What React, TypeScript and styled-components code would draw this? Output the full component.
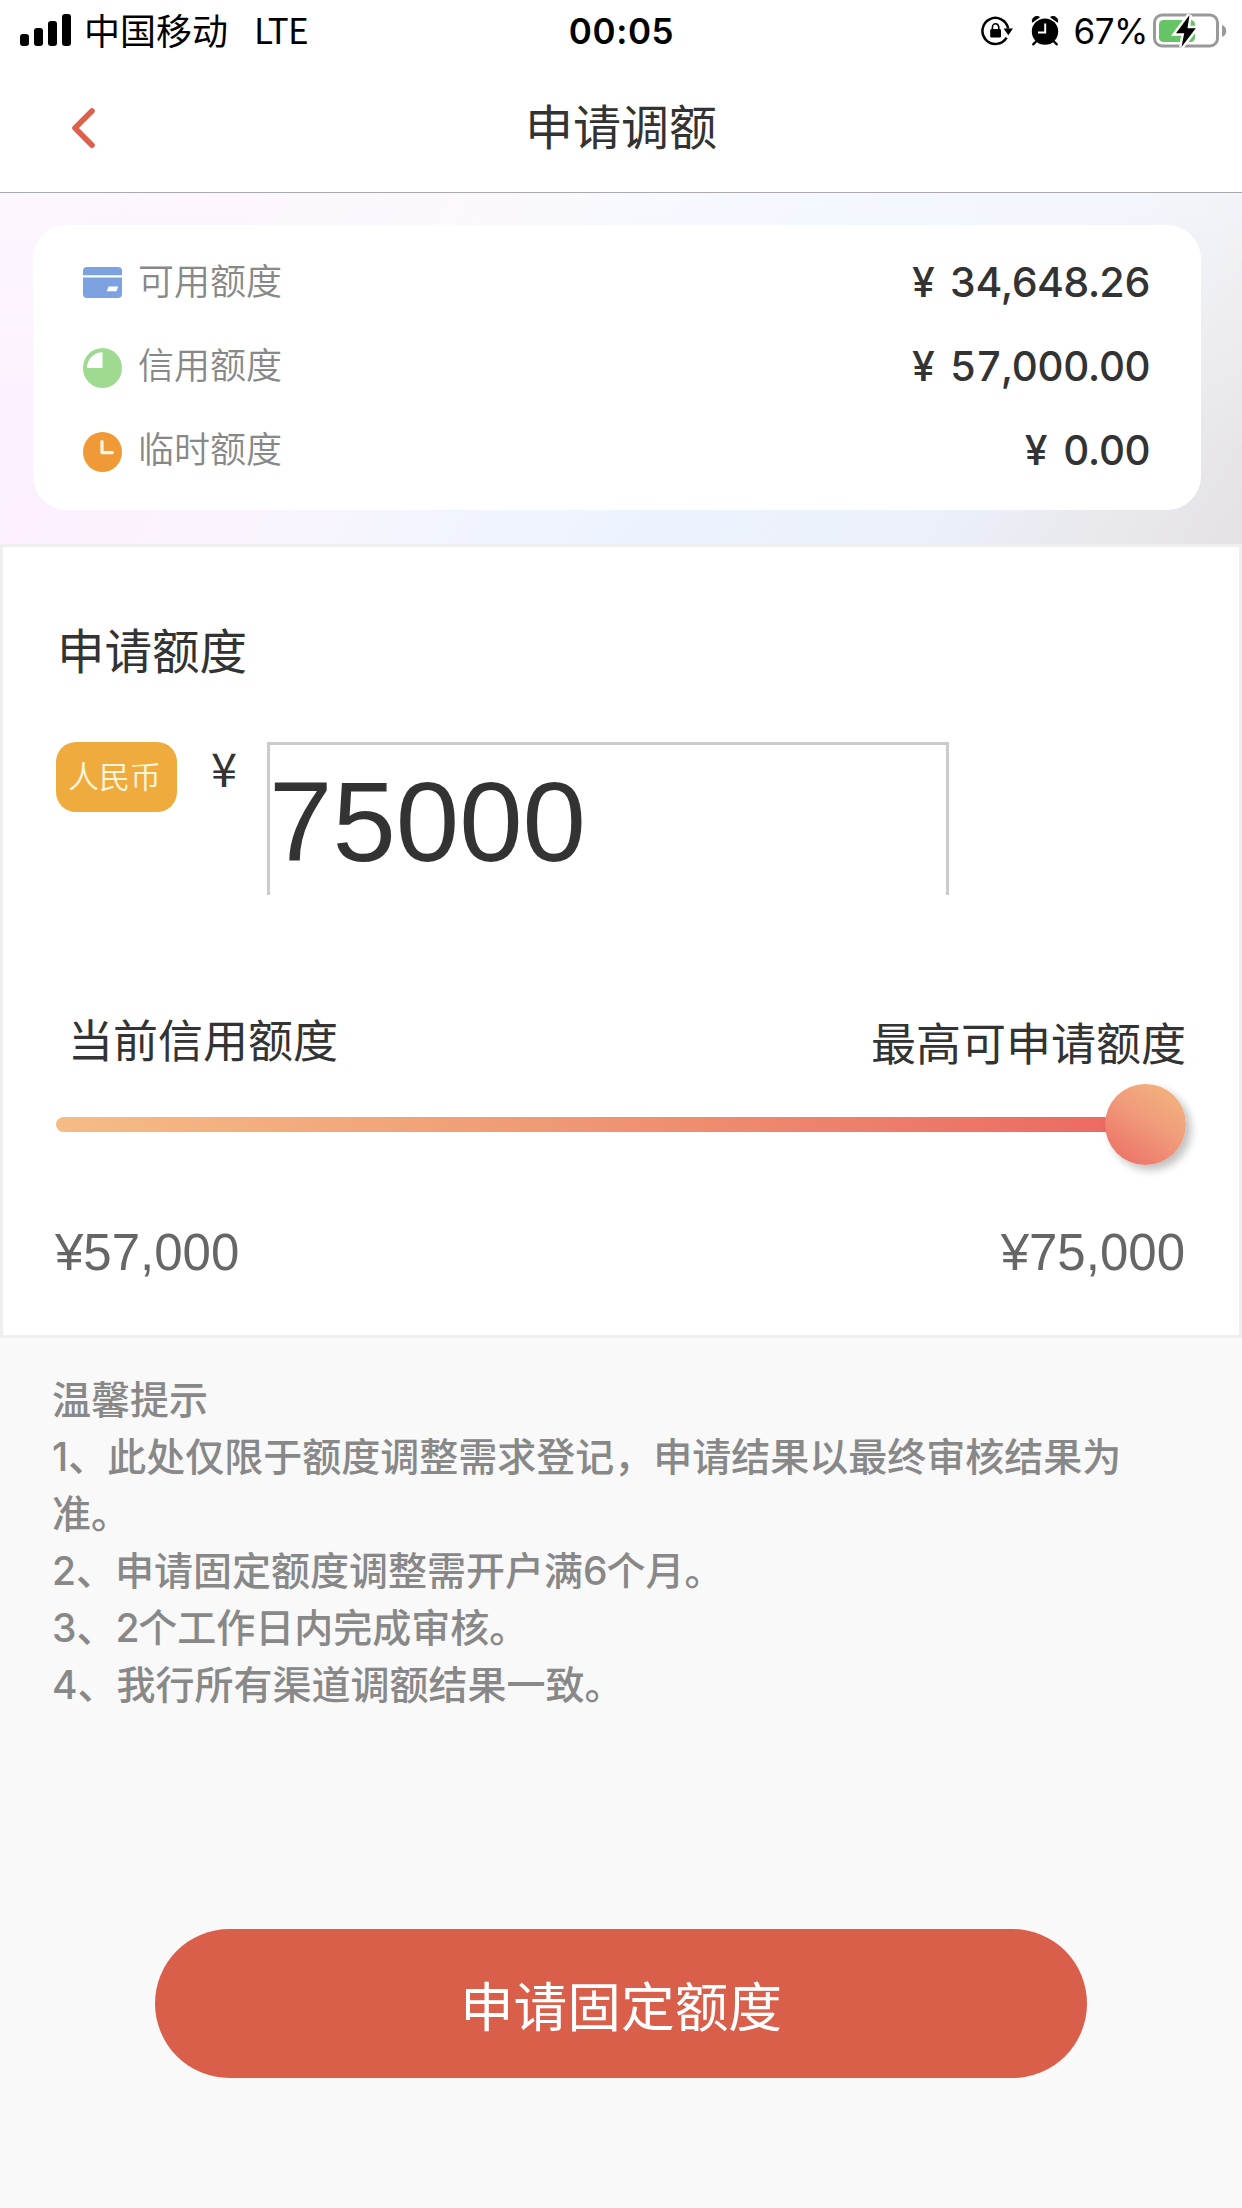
import React from 'react';
import styled, { createGlobalStyle } from 'styled-components';

const cjk = '"Noto Sans CJK SC", sans-serif';
const ui = 'Inter, "Noto Sans CJK SC", sans-serif';
const helv = '"Liberation Sans", "Noto Sans CJK SC", sans-serif';

const GlobalStyle = createGlobalStyle`
  *, *::before, *::after { box-sizing: border-box; }
  body { margin: 0; background: #f9f9f9; font-family: ${cjk}; color: #333; }
  svg { display: block; flex: none; }
`;

const Screen = styled.div`
  display: flex;
  flex-direction: column;
  width: 1242px;
  height: 2208px;
  background: #f9f9f9;
  overflow: hidden;
`;

const StatusBar = styled.header`
  display: grid;
  grid-template-columns: 1fr auto 1fr;
  align-items: center;
  height: 62px;
  padding: 0 15px 0 20px;
  background: #fff;
  color: #000;
`;

const StatusGroup = styled.div<{ $end?: boolean }>`
  display: flex;
  align-items: center;
  justify-content: ${(p) => (p.$end ? 'flex-end' : 'flex-start')};
`;

const Carrier = styled.span`
  margin: -4px 0 0 12px;
  font: 400 36px/40px ${cjk};
`;

const Network = styled.span`
  margin: -4px 0 0 26px;
  font: 400 35px/40px ${cjk};
  letter-spacing: -0.6px;
`;

const Clock = styled.time`
  padding-right: 4px;
  font: 600 35px/40px ${ui};
  letter-spacing: 0.6px;
`;

const StatusIcons = styled.div`
  display: flex;
  align-items: center;
  gap: 18px;
`;

const Percent = styled.span`
  margin: 0 5px 0 15px;
  font: 400 35px/40px ${ui};
  letter-spacing: -0.5px;
`;

const NavBar = styled.nav`
  display: grid;
  grid-template-columns: 120px 1fr 120px;
  align-items: center;
  height: 131px;
  background: #fff;
  border-bottom: 1px solid #a9a9ae;
`;

const BackButton = styled.button`
  padding: 1px 0 0 70px;
  border: 0;
  background: none;
`;

const Title = styled.h1`
  margin: 0 0 7px;
  text-align: center;
  font: 400 48px/60px ${cjk};
`;

const Hero = styled.section`
  height: 351px;
  padding: 32px 41px 34px 33px;
  background:
    linear-gradient(180deg, rgba(255, 255, 255, 0.4) 0%, rgba(255, 255, 255, 0) 75%),
    linear-gradient(122deg, #fbf1fe 0%, #fcf0fe 16%, #faf4fd 32%, #f2f5fe 44%, #edf3fe 58%, #ebf0fa 78%, #e9e9ee 89%, #e5e2e7 100%);
`;

const LimitCard = styled.div`
  height: 285px;
  padding: 14px 51px 0 50px;
  border-radius: 34px;
  background: #fff;
`;

const LimitRow = styled.div`
  display: flex;
  align-items: center;
  height: 84px;
  svg { margin-top: 6px; }
`;

const LimitLabel = styled.span`
  flex: 1;
  margin: -4px 0 0 16px;
  color: #888;
  font: 350 36px/44px ${cjk};
`;

const LimitAmount = styled.span`
  margin-top: 2px;
  font: 450 41px/50px ${ui};
  font-variant-numeric: tabular-nums;
  letter-spacing: -0.9px;
  word-spacing: 6px;
`;

const FormPanel = styled.section`
  display: flex;
  flex-direction: column;
  height: 794px;
  padding: 72px 53px 0;
  border: 3px solid #efefef;
  background: #fff;
`;

const SectionTitle = styled.h2`
  margin: 0;
  padding-left: 1px;
  font: 400 47.5px/60px ${cjk};
`;

const AmountRow = styled.div`
  display: flex;
  align-items: flex-start;
  height: 153px;
  margin-top: 63px;
`;

const CurrencyBadge = styled.span`
  width: 121px;
  height: 70px;
  padding-right: 4px;
  border-radius: 20px;
  background: #efab3d;
  color: #fef6dc;
  text-align: center;
  font: 350 31px/66px ${cjk};
`;

const CurrencySign = styled.span`
  width: 90px;
  padding-left: 4px;
  text-align: center;
  font: 400 47px/50px ${cjk};
`;

const AmountInput = styled.input`
  width: 682px;
  height: 153px;
  padding: 2px 0 0;
  border: 3px solid #ccc;
  border-bottom: 0;
  border-radius: 0;
  outline: 0;
  background: #fff;
  color: #333;
  font: 400 114px/130px ${helv};
  text-indent: -1px;
`;

const RangeLabels = styled.div`
  display: flex;
  justify-content: space-between;
  align-items: flex-start;
  height: 56px;
  margin-top: 117px;
  padding-left: 12px;
  font: 400 45px/54px ${cjk};
`;

const MaxLabel = styled.span`
  margin-top: 3px;
`;

const Slider = styled.div`
  display: flex;
  align-items: center;
  height: 81px;
  margin-top: 16px;
`;

const Track = styled.div`
  flex: 1;
  height: 15px;
  border-radius: 8px;
  background: linear-gradient(90deg, #f5bc86 0%, #f0a078 38%, #eb6c63 97%);
`;

const Thumb = styled.div`
  width: 81px;
  height: 81px;
  margin-left: -20px;
  border-radius: 50%;
  background: linear-gradient(215deg, #f2b17d 12%, #f09c7b 45%, #ed6e65 95%);
  box-shadow: 5px 5px 9px rgba(0, 0, 0, 0.25);
`;

const RangeValues = styled.div`
  display: flex;
  justify-content: space-between;
  margin: 58px 1px 0 -1px;
  color: #666;
  font: 400 51px/60px ${helv};
`;

const Tips = styled.section`
  padding: 31px 90px 0 52px;
  color: #888;
  font: 500 39px/57px ${cjk};
`;

const TipLine = styled.p`
  margin: 0;
`;

const Num = styled.span<{ $inline?: boolean }>`
  font-family: ${ui};
  font-size: 39px;
  font-weight: 450;
  line-height: 40px;
  letter-spacing: ${(p) => (p.$inline ? '-1.2px' : '0')};
`;

const SubmitButton = styled.button`
  width: 932px;
  height: 149px;
  margin: 218px auto 0;
  padding: 0;
  border: 0;
  border-radius: 75px;
  background: #da5f4b;
  color: #fff;
  font: 400 53.7px/80px ${cjk};
`;

const SignalIcon = () => (
  <svg width="52" height="34" viewBox="0 0 52 34">
    <rect x="0" y="20" width="9" height="12" rx="3" />
    <rect x="14" y="14" width="9" height="18" rx="3" />
    <rect x="28" y="7" width="9" height="25" rx="3" />
    <rect x="42" y="0" width="9" height="32" rx="3" />
  </svg>
);

const RotationLockIcon = () => (
  <svg width="32" height="30" viewBox="0 0 32 30">
    <path d="M25.6 21.6A13 13 0 1 1 27.2 12.5" fill="none" stroke="#000" strokeWidth="2.5" />
    <path d="M22.6 12.6H32L27.3 19.2Z" />
    <rect x="9.2" y="13" width="10.8" height="8.6" rx="1.4" />
    <path d="M11.4 14v-2.6a3.2 3.6 0 0 1 6.4 0V14" fill="none" stroke="#000" strokeWidth="1.6" />
  </svg>
);

const AlarmIcon = () => (
  <svg width="28" height="30" viewBox="0 0 28 30">
    <circle cx="14" cy="15.6" r="13.2" />
    <path d="M1.4 6.2A4.6 4.6 0 0 1 8.4 1.2Z M26.6 6.2A4.6 4.6 0 0 0 19.6 1.2Z" stroke="#000" strokeWidth="1" strokeLinejoin="round" />
    <path d="M5.6 25 2.2 28.4M22.4 25l3.4 3.4" stroke="#000" strokeWidth="2.2" strokeLinecap="round" />
    <path d="M14.2 7.6v8.8H7" fill="none" stroke="#fff" strokeWidth="2" />
  </svg>
);

const BatteryIcon = () => (
  <svg width="74" height="36" viewBox="0 0 74 36">
    <rect x="1.5" y="2" width="63" height="31" rx="7.5" fill="none" stroke="#999" strokeWidth="3" />
    <rect x="6" y="7" width="36" height="22" rx="4.5" fill="#65c466" />
    <path d="M69 12a6.4 6.4 0 0 1 0 12Z" fill="#999" />
    <path d="M36.5 2 23 20.2h8.2L28.5 34 42.8 15.2h-8.3Z" fill="#000" stroke="#fff" strokeWidth="5" paintOrder="stroke" />
  </svg>
);

const BackIcon = () => (
  <svg width="28" height="44" viewBox="0 0 28 44">
    <path d="M22 5 5 22l17 17.2" fill="none" stroke="#dd604c" strokeWidth="5.6" strokeLinecap="round" strokeLinejoin="round" />
  </svg>
);

const CardIcon = () => (
  <svg width="39" height="40" viewBox="0 0 39 40">
    <rect x="0" y="3" width="39" height="31" rx="4" fill="#7ca3e0" />
    <path d="M0 12.4h39" stroke="#fff" strokeWidth="2.4" />
    <path d="M25.6 22.6h9.6l-1.8 4.6h-9.6Z" fill="#fff" />
  </svg>
);

const PieIcon = () => (
  <svg width="39" height="40" viewBox="0 0 39 40">
    <ellipse cx="19.5" cy="20" rx="19.5" ry="20" fill="#9edb90" />
    <path d="M19.5 4.2V20H4A15.6 15.8 0 0 1 19.5 4.2Z" fill="#fff" />
  </svg>
);

const ClockIcon = () => (
  <svg width="39" height="40" viewBox="0 0 39 40">
    <ellipse cx="19.5" cy="20" rx="19.5" ry="20" fill="#f09a37" />
    <path d="M19 9.6v11h10.4" fill="none" stroke="#fff8ea" strokeWidth="3.2" strokeLinecap="round" strokeLinejoin="round" />
  </svg>
);

const limits = [
  { icon: <CardIcon />, label: '可用额度', amount: '¥ 34,648.26' },
  { icon: <PieIcon />, label: '信用额度', amount: '¥ 57,000.00' },
  { icon: <ClockIcon />, label: '临时额度', amount: '¥ 0.00' },
];

export default function App() {
  return (
    <>
      <GlobalStyle />
      <Screen lang="zh-CN">
        <StatusBar>
          <StatusGroup>
            <SignalIcon />
            <Carrier>中国移动</Carrier>
            <Network>LTE</Network>
          </StatusGroup>
          <Clock>00:05</Clock>
          <StatusGroup $end>
            <StatusIcons>
              <RotationLockIcon />
              <AlarmIcon />
            </StatusIcons>
            <Percent>67%</Percent>
            <BatteryIcon />
          </StatusGroup>
        </StatusBar>

        <NavBar>
          <BackButton aria-label="返回">
            <BackIcon />
          </BackButton>
          <Title>申请调额</Title>
        </NavBar>

        <Hero>
          <LimitCard>
            {limits.map((item) => (
              <LimitRow key={item.label}>
                {item.icon}
                <LimitLabel>{item.label}</LimitLabel>
                <LimitAmount>{item.amount}</LimitAmount>
              </LimitRow>
            ))}
          </LimitCard>
        </Hero>

        <FormPanel>
          <SectionTitle>申请额度</SectionTitle>
          <AmountRow>
            <CurrencyBadge>人民币</CurrencyBadge>
            <CurrencySign>¥</CurrencySign>
            <AmountInput defaultValue="75000" />
          </AmountRow>
          <RangeLabels>
            <span>当前信用额度</span>
            <MaxLabel>最高可申请额度</MaxLabel>
          </RangeLabels>
          <Slider>
            <Track />
            <Thumb />
          </Slider>
          <RangeValues>
            <span>¥57,000</span>
            <span>¥75,000</span>
          </RangeValues>
        </FormPanel>

        <Tips>
          <TipLine>温馨提示</TipLine>
          <TipLine>
            <Num>1</Num>、此处仅限于额度调整需求登记，申请结果以最终审核结果为
            <br />
            准。
          </TipLine>
          <TipLine><Num>2</Num>、申请固定额度调整需开户满<Num $inline>6</Num>个月。</TipLine>
          <TipLine><Num>3</Num>、<Num $inline>2</Num>个工作日内完成审核。</TipLine>
          <TipLine><Num>4</Num>、我行所有渠道调额结果一致。</TipLine>
        </Tips>

        <SubmitButton>申请固定额度</SubmitButton>
      </Screen>
    </>
  );
}
